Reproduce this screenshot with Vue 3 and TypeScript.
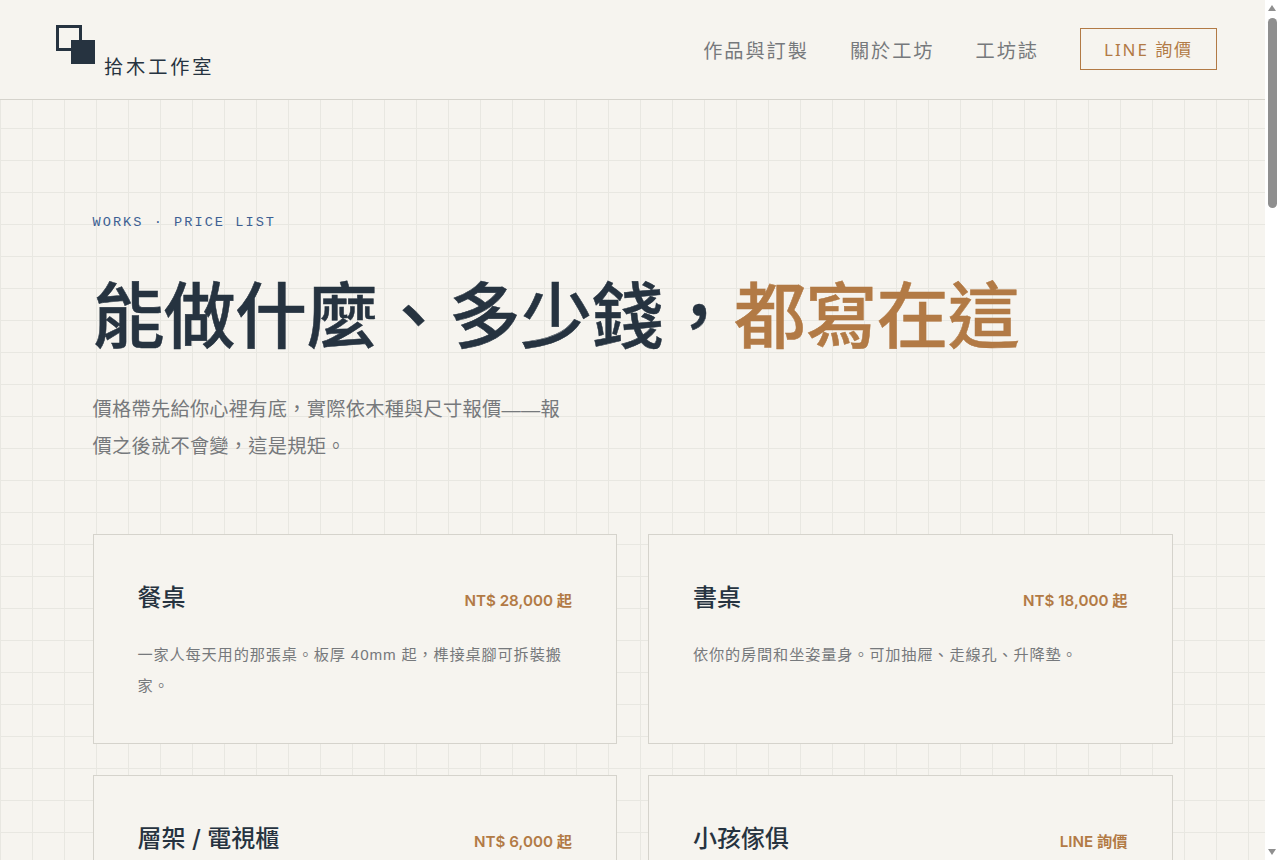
<template>
  <div class="page">
    <header class="site-header">
      <a class="brand" href="#">
        <svg class="brand-mark" width="48" height="48" viewBox="0 0 48 48" aria-hidden="true">
          <rect x="9.5" y="6.5" width="23" height="23" fill="none" stroke="#263340" stroke-width="3" />
          <rect x="23" y="20" width="24" height="24" fill="#263340" />
        </svg>
        <span class="brand-name">拾木工作室</span>
      </a>
      <nav class="site-nav">
        <a v-for="item in navItems" :key="item" href="#">{{ item }}</a>
        <a class="nav-cta" href="#">LINE 詢價</a>
      </nav>
    </header>

    <main class="content">
      <p class="eyebrow">WORKS · PRICE LIST</p>
      <h1>能做什麼、多少錢，<em>都寫在這</em></h1>
      <p class="lead">價格帶先給你心裡有底，實際依木種與尺寸報價——報價之後就不會變，這是規矩。</p>

      <section class="price-grid">
        <article v-for="card in cards" :key="card.title" class="price-card">
          <div class="card-head">
            <h2>{{ card.title }}</h2>
            <span class="price">{{ card.price }}</span>
          </div>
          <p v-if="card.desc" class="desc">{{ card.desc }}</p>
        </article>
      </section>
    </main>

    <!-- window scrollbar, the headless browser does not paint one -->
    <div class="scrollbar" aria-hidden="true">
      <span class="arrow up"></span>
      <span class="thumb"></span>
      <span class="arrow down"></span>
    </div>
  </div>
</template>

<script setup lang="ts">
interface PriceCard {
  title: string;
  price: string;
  desc?: string;
}

const navItems: string[] = ["作品與訂製", "關於工坊", "工坊誌"];

const cards: PriceCard[] = [
  { title: "餐桌", price: "NT$ 28,000 起", desc: "一家人每天用的那張桌。板厚 40mm 起，榫接桌腳可拆裝搬家。" },
  { title: "書桌", price: "NT$ 18,000 起", desc: "依你的房間和坐姿量身。可加抽屜、走線孔、升降墊。" },
  { title: "層架 / 電視櫃", price: "NT$ 6,000 起" },
  { title: "小孩傢俱", price: "LINE 詢價" },
];
</script>

<style>
html,
body {
  margin: 0;
  background: #fff;
}
</style>

<style scoped>
.page {
  width: 1265px;
  min-height: 3700px;
  color: #263340;
  font-family: "Inter", "Noto Sans CJK TC", sans-serif;
  background-color: #f6f4ef;
  background-image:
    linear-gradient(to right, #e8e7e1 1px, transparent 1px),
    linear-gradient(to bottom, #e8e7e1 1px, transparent 1px);
  background-size: 32px 32px;
}

.site-header {
  display: flex;
  align-items: center;
  justify-content: space-between;
  box-sizing: border-box;
  height: 100px;
  padding: 0 48px;
  background: #f6f4ef;
  border-bottom: 1px solid #d5d3cc;
}

.brand {
  display: flex;
  align-items: flex-end;
  gap: 8px;
  height: 60px;
  color: #263340;
  text-decoration: none;
}

.brand-mark {
  display: block;
  align-self: flex-start;
}

.brand-name {
  font-family: "Noto Sans CJK TC", sans-serif;
  font-size: 19.2px;
  line-height: 28px;
  letter-spacing: 0.15em;
}

.site-nav {
  display: flex;
  align-items: center;
  gap: 41.2px;
  font-family: "Noto Sans", "Noto Sans CJK TC", sans-serif;
  font-size: 19.2px;
  letter-spacing: 0.1em;
}

.site-nav a {
  color: #76797c;
  text-decoration: none;
}

.site-nav .nav-cta {
  margin: -1px 0 1px;
  padding: 9px 23px 7px;
  font-size: 17px;
  line-height: 24px;
  color: #b27a45;
  border: 1px solid #b27a45;
}

.content {
  max-width: 1080px;
  margin: 0 auto;
  padding-top: 113px;
}

.eyebrow {
  margin: 0 0 40px;
  font-family: "Liberation Mono", monospace;
  font-size: 13.6px;
  line-height: 20px;
  letter-spacing: 0.15em;
  color: #3d5f93;
}

h1 {
  margin: 0 0 32px;
  font-family: "Inter", "Noto Sans CJK TC", sans-serif;
  font-size: 72px;
  font-weight: 500;
  line-height: 1.2;
  letter-spacing: -0.01em;
  color: #263340;
  -webkit-text-stroke: 0.5px currentColor;
}

h1 em {
  font-style: normal;
  color: #b27a45;
}

.lead {
  max-width: 480px;
  margin: 0 0 69px;
  font-family: "Liberation Sans", "Noto Sans CJK TC", sans-serif;
  font-size: 19.2px;
  line-height: 37px;
  letter-spacing: 0.015em;
  color: #76797c;
}

.price-grid {
  display: grid;
  grid-template-columns: 1fr 1fr;
  gap: 31px;
}

.price-card {
  padding: 42px 44px;
  background: #f6f4ef;
  border: 1px solid #d5d3cc;
}

.card-head {
  display: flex;
  align-items: baseline;
  justify-content: space-between;
  margin-bottom: 20px;
}

h2 {
  margin: 0;
  font-size: 24px;
  font-weight: 500;
  line-height: 42px;
  color: #263340;
}

.price {
  font-size: 15.2px;
  font-weight: 600;
  color: #b27a45;
}

.desc {
  margin: 0;
  font-family: "Liberation Sans", "Noto Sans CJK TC", sans-serif;
  font-size: 15.2px;
  line-height: 31px;
  letter-spacing: 0.055em;
  color: #76797c;
}

.scrollbar {
  position: fixed;
  top: 0;
  right: 0;
  bottom: 0;
  width: 15px;
  background: #fff;
}

.thumb {
  position: absolute;
  top: 18px;
  left: 3px;
  width: 9px;
  height: 190px;
  background: #8f8f8f;
  border-radius: 5px;
}

.arrow {
  position: absolute;
  left: 3px;
  border-left: 4.5px solid transparent;
  border-right: 4.5px solid transparent;
}

.arrow.up {
  top: 5px;
  border-bottom: 6px solid #8f8f8f;
}

.arrow.down {
  bottom: 5px;
  border-top: 6px solid #8f8f8f;
}
</style>
